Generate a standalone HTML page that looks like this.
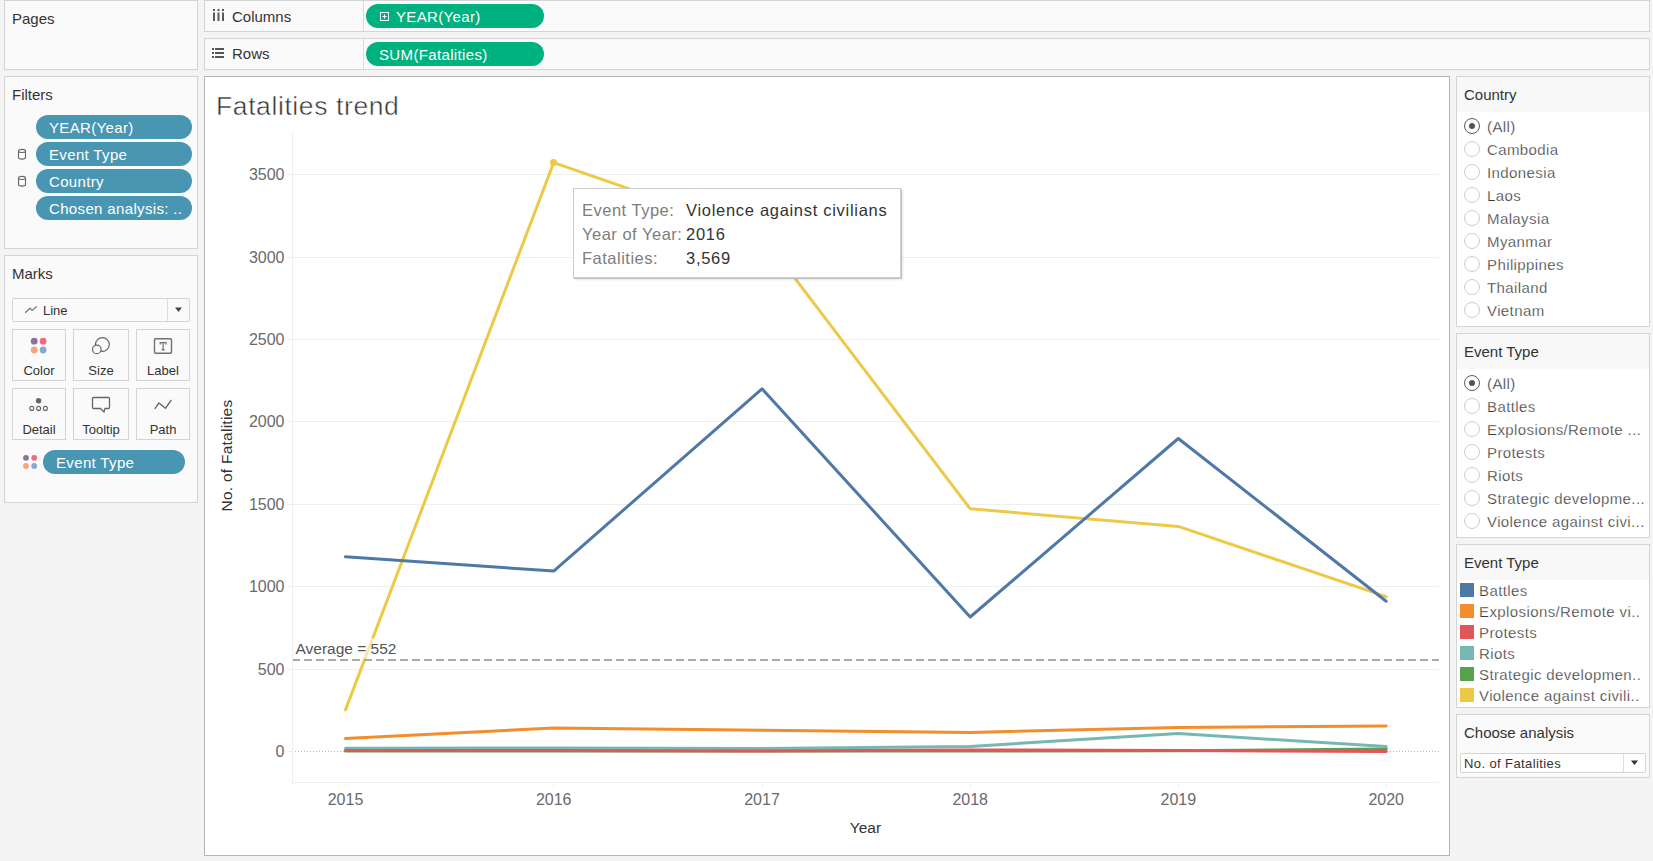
<!DOCTYPE html>
<html><head><meta charset="utf-8">
<style>
*{box-sizing:border-box;margin:0;padding:0}
html,body{width:1653px;height:861px;overflow:hidden;background:#f4f4f4;font-family:"Liberation Sans",sans-serif;color:#333}
.a{position:absolute}
.card{position:absolute;background:#fafafa;border:1px solid #d4d4d4}
.t{position:absolute;white-space:nowrap;font-size:15px;line-height:15px}
.pill{position:absolute;border-radius:12px;color:#fff;font-size:15px;line-height:24px;white-space:nowrap;overflow:hidden}
.bp{background:#4996b2}
.gp{background:#00b180}
.btn{position:absolute;border:1px solid #d4d4d4;background:#fafafa}
.btn span{position:absolute;left:0;right:0;text-align:center;font-size:13px;line-height:13px;color:#333}
.rad{position:absolute;width:16px;height:16px;border-radius:50%;border:1px solid #cdcdcd;background:#fff}
.rad.on::after{content:"";position:absolute;left:4px;top:4px;width:6px;height:6px;border-radius:50%;background:#555}
.rad.on{border-color:#5a5a5a}
.sw{position:absolute;width:14px;height:14px}
.ax{font-family:"Liberation Sans",sans-serif;font-size:16px;fill:#6a6a6a}
.avg{font-family:"Liberation Sans",sans-serif;font-size:15.5px;fill:#555}
.ttl{font-family:"Liberation Sans",sans-serif;font-size:15.5px;fill:#333}
.ytl{letter-spacing:0.25px}
.lt{position:absolute;white-space:nowrap;font-size:15px;line-height:15px;color:#3a3a3a;letter-spacing:0.4px;-webkit-text-stroke:0.25px #fff}
.tip{position:absolute;left:573px;top:188px;width:328px;height:90px;background:#fff;border:1px solid #cdcdcd;box-shadow:1px 1px 0 #c2c2c2,2px 2px 2px rgba(0,0,0,0.10)}
.tl{position:absolute;white-space:nowrap;font-size:16.5px;line-height:16px;color:#7d7d7d;letter-spacing:0.5px}
.tv{position:absolute;white-space:nowrap;font-size:16.5px;line-height:16px;color:#333;letter-spacing:0.7px}
</style></head><body>

<!-- Pages -->
<div class="card" style="left:4px;top:0;width:194px;height:70px"></div>
<div class="t" style="left:12px;top:11px">Pages</div>

<!-- Columns shelf -->
<div class="card" style="left:204px;top:0;width:1446px;height:32px"></div>
<div class="a" style="left:363px;top:1px;width:1px;height:30px;background:#dcdcdc"></div>
<svg class="a" style="left:211.5px;top:8px" width="14" height="14">
<rect x="1" y="1" width="2" height="2" fill="#5a5a5a"/><rect x="1" y="4.5" width="2" height="8.5" fill="#5a5a5a"/>
<rect x="5.5" y="1" width="2" height="2" fill="#5a5a5a"/><rect x="5.5" y="4.5" width="2" height="8.5" fill="#5a5a5a"/>
<rect x="10" y="1" width="2" height="2" fill="#5a5a5a"/><rect x="10" y="4.5" width="2" height="8.5" fill="#5a5a5a"/>
</svg>
<div class="t" style="left:232px;top:9px">Columns</div>
<div class="pill gp" style="left:366px;top:4px;width:178px;height:24px"></div>
<svg class="a" style="left:379px;top:11px" width="11" height="11"><rect x="1.5" y="1.5" width="8" height="8" fill="none" stroke="#fff" stroke-width="1"/><path d="M5.5 3.5v4M3.5 5.5h4" stroke="#fff" stroke-width="1"/></svg>
<div class="t" style="left:396px;top:9px;color:#fff;letter-spacing:0.35px">YEAR(Year)</div>

<!-- Rows shelf -->
<div class="card" style="left:204px;top:38px;width:1446px;height:32px"></div>
<div class="a" style="left:363px;top:39px;width:1px;height:30px;background:#dcdcdc"></div>
<svg class="a" style="left:211px;top:47px" width="14" height="14">
<rect x="1" y="1" width="2" height="2" fill="#555"/><rect x="4" y="1" width="9" height="2" fill="#555"/>
<rect x="1" y="5" width="2" height="2" fill="#555"/><rect x="4" y="5" width="9" height="2" fill="#555"/>
<rect x="1" y="9" width="2" height="2" fill="#555"/><rect x="4" y="9" width="9" height="2" fill="#555"/>
</svg>
<div class="t" style="left:232px;top:46px">Rows</div>
<div class="pill gp" style="left:366px;top:42px;width:178px;height:24px"></div>
<div class="t" style="left:379px;top:47px;color:#fff;letter-spacing:0.35px">SUM(Fatalities)</div>

<!-- Filters -->
<div class="card" style="left:4px;top:76px;width:194px;height:173px"></div>
<div class="t" style="left:12px;top:87px">Filters</div>
<div class="pill bp" style="left:36px;top:115px;width:156px;height:24px"></div>
<div class="pill bp" style="left:36px;top:142px;width:156px;height:24px"></div>
<div class="pill bp" style="left:36px;top:169px;width:156px;height:24px"></div>
<div class="pill bp" style="left:36px;top:196px;width:156px;height:24px"></div>
<div class="t" style="left:49px;top:120px;color:#fff;letter-spacing:0.35px">YEAR(Year)</div>
<div class="t" style="left:49px;top:147px;color:#fff;letter-spacing:0.35px">Event Type</div>
<div class="t" style="left:49px;top:174px;color:#fff;letter-spacing:0.35px">Country</div>
<div class="t" style="left:49px;top:201px;color:#fff;letter-spacing:0.35px">Chosen analysis: ..</div>
<svg class="a" style="left:17px;top:148px" width="11" height="12"><path d="M1.5 3v6.5c0 1.1 1.6 1.6 3.5 1.6s3.5-.5 3.5-1.6V3c0-1.1-1.6-1.6-3.5-1.6S1.5 1.9 1.5 3zM1.5 3.6c.6.7 2 .9 3.5.9s2.9-.2 3.5-.9" fill="none" stroke="#666" stroke-width="1.1"/></svg>
<svg class="a" style="left:17px;top:175px" width="11" height="12"><path d="M1.5 3v6.5c0 1.1 1.6 1.6 3.5 1.6s3.5-.5 3.5-1.6V3c0-1.1-1.6-1.6-3.5-1.6S1.5 1.9 1.5 3zM1.5 3.6c.6.7 2 .9 3.5.9s2.9-.2 3.5-.9" fill="none" stroke="#666" stroke-width="1.1"/></svg>

<!-- Marks -->
<div class="card" style="left:4px;top:255px;width:194px;height:248px"></div>
<div class="t" style="left:12px;top:266px">Marks</div>
<div class="btn" style="left:12px;top:298px;width:178px;height:24px;border-radius:2px"></div>
<div class="a" style="left:167px;top:299px;width:1px;height:22px;background:#dedede"></div>
<svg class="a" style="left:174px;top:306px" width="9" height="8"><path d="M1 1.5h7L4.5 6z" fill="#444"/></svg>
<svg class="a" style="left:24px;top:305px" width="14" height="9"><path d="M1.2 7.8L6.2 3.2 8 5.5 12.8 1.5" fill="none" stroke="#777" stroke-width="1.2"/></svg>
<div class="t" style="left:43px;top:304px;font-size:13px;line-height:13px">Line</div>
<div class="btn" style="left:12px;top:329px;width:54px;height:52px"><span style="top:34px">Color</span></div>
<div class="btn" style="left:73px;top:329px;width:56px;height:52px"><span style="top:34px">Size</span></div>
<div class="btn" style="left:136px;top:329px;width:54px;height:52px"><span style="top:34px">Label</span></div>
<div class="btn" style="left:12px;top:388px;width:54px;height:52px"><span style="top:34px">Detail</span></div>
<div class="btn" style="left:73px;top:388px;width:56px;height:52px"><span style="top:34px">Tooltip</span></div>
<div class="btn" style="left:136px;top:388px;width:54px;height:52px"><span style="top:34px">Path</span></div>
<svg class="a" style="left:0;top:0" width="200" height="500">
<circle cx="34.2" cy="341.2" r="3.4" fill="#8a729c"/><circle cx="43.1" cy="341.2" r="3.4" fill="#ef6b81"/>
<circle cx="34.2" cy="350" r="3.4" fill="#f2a77c"/><circle cx="43.1" cy="350" r="3.4" fill="#87a9d1"/>
<circle cx="102.4" cy="344.5" r="6.9" fill="none" stroke="#666" stroke-width="1.2"/>
<circle cx="96.8" cy="349.4" r="4.3" fill="#fafafa" stroke="#666" stroke-width="1.2"/>
<rect x="154.5" y="338.8" width="17" height="14.5" rx="1" fill="none" stroke="#707070" stroke-width="1.4"/>
<path d="M160.2 344.6v-1.9h5.8v1.9M163.1 342.7v7.2M161.5 349.9h3.2" fill="none" stroke="#707070" stroke-width="1.2"/>
<circle cx="38.6" cy="400.8" r="2.7" fill="#666"/>
<circle cx="31.8" cy="408.4" r="2.0" fill="none" stroke="#666" stroke-width="1.1"/>
<circle cx="38.6" cy="408.4" r="2.0" fill="none" stroke="#666" stroke-width="1.1"/>
<circle cx="45.4" cy="408.4" r="2.0" fill="none" stroke="#666" stroke-width="1.1"/>
<path d="M93.5 397.5h15c.6 0 1 .4 1 1v9c0 .6-.4 1-1 1h-3.5l-1 3.5-3.5-3.5h-7c-.6 0-1-.4-1-1v-9c0-.6.4-1 1-1z" fill="none" stroke="#666" stroke-width="1.3"/>
<path d="M154.8 408.8L158.9 403 165.5 408.2 171.3 400" fill="none" stroke="#666" stroke-width="1.3"/>
<circle cx="26" cy="457.8" r="2.9" fill="#8a729c"/><circle cx="34.2" cy="457.8" r="2.9" fill="#ef6b81"/>
<circle cx="26" cy="466" r="2.9" fill="#f2a77c"/><circle cx="34.2" cy="466" r="2.9" fill="#87a9d1"/>
</svg>
<div class="pill bp" style="left:43px;top:450px;width:142px;height:24px"></div>
<div class="t" style="left:56px;top:455px;color:#fff;letter-spacing:0.35px">Event Type</div>

<!-- Viz -->
<div class="a" style="left:204px;top:76px;width:1246px;height:780px;background:#fff;border:1px solid #b5b5b5"></div>
<div class="t" style="left:216px;top:93px;font-size:26.5px;line-height:26px;color:#333;letter-spacing:0.6px;-webkit-text-stroke:0.5px #fff">Fatalities trend</div>
<svg class="a" style="left:0;top:0" width="1653" height="861">
<line x1="287" y1="751.5" x2="292" y2="751.5" stroke="#ededed" stroke-width="1"/>
<line x1="287" y1="669.5" x2="1439" y2="669.5" stroke="#efefef" stroke-width="1"/>
<line x1="287" y1="586.5" x2="1439" y2="586.5" stroke="#efefef" stroke-width="1"/>
<line x1="287" y1="504.5" x2="1439" y2="504.5" stroke="#efefef" stroke-width="1"/>
<line x1="287" y1="421.5" x2="1439" y2="421.5" stroke="#efefef" stroke-width="1"/>
<line x1="287" y1="339.5" x2="1439" y2="339.5" stroke="#efefef" stroke-width="1"/>
<line x1="287" y1="257.5" x2="1439" y2="257.5" stroke="#efefef" stroke-width="1"/>
<line x1="287" y1="174.5" x2="1439" y2="174.5" stroke="#efefef" stroke-width="1"/>
<line x1="292.5" y1="132" x2="292.5" y2="783" stroke="#eeeeee" stroke-width="1"/>
<line x1="292" y1="782.5" x2="1439" y2="782.5" stroke="#eeeeee" stroke-width="1"/>
<line x1="293.5" y1="782" x2="293.5" y2="784" stroke="#ededed" stroke-width="1"/>
<line x1="310.5" y1="782" x2="310.5" y2="784" stroke="#ededed" stroke-width="1"/>
<line x1="327.5" y1="782" x2="327.5" y2="784" stroke="#ededed" stroke-width="1"/>
<line x1="345.5" y1="782" x2="345.5" y2="787" stroke="#ededed" stroke-width="1"/>
<line x1="363.5" y1="782" x2="363.5" y2="784" stroke="#ededed" stroke-width="1"/>
<line x1="379.5" y1="782" x2="379.5" y2="784" stroke="#ededed" stroke-width="1"/>
<line x1="396.5" y1="782" x2="396.5" y2="784" stroke="#ededed" stroke-width="1"/>
<line x1="413.5" y1="782" x2="413.5" y2="784" stroke="#ededed" stroke-width="1"/>
<line x1="431.5" y1="782" x2="431.5" y2="784" stroke="#ededed" stroke-width="1"/>
<line x1="448.5" y1="782" x2="448.5" y2="784" stroke="#ededed" stroke-width="1"/>
<line x1="466.5" y1="782" x2="466.5" y2="784" stroke="#ededed" stroke-width="1"/>
<line x1="483.5" y1="782" x2="483.5" y2="784" stroke="#ededed" stroke-width="1"/>
<line x1="501.5" y1="782" x2="501.5" y2="784" stroke="#ededed" stroke-width="1"/>
<line x1="518.5" y1="782" x2="518.5" y2="784" stroke="#ededed" stroke-width="1"/>
<line x1="535.5" y1="782" x2="535.5" y2="784" stroke="#ededed" stroke-width="1"/>
<line x1="553.5" y1="782" x2="553.5" y2="787" stroke="#ededed" stroke-width="1"/>
<line x1="571.5" y1="782" x2="571.5" y2="784" stroke="#ededed" stroke-width="1"/>
<line x1="587.5" y1="782" x2="587.5" y2="784" stroke="#ededed" stroke-width="1"/>
<line x1="605.5" y1="782" x2="605.5" y2="784" stroke="#ededed" stroke-width="1"/>
<line x1="622.5" y1="782" x2="622.5" y2="784" stroke="#ededed" stroke-width="1"/>
<line x1="640.5" y1="782" x2="640.5" y2="784" stroke="#ededed" stroke-width="1"/>
<line x1="657.5" y1="782" x2="657.5" y2="784" stroke="#ededed" stroke-width="1"/>
<line x1="674.5" y1="782" x2="674.5" y2="784" stroke="#ededed" stroke-width="1"/>
<line x1="692.5" y1="782" x2="692.5" y2="784" stroke="#ededed" stroke-width="1"/>
<line x1="709.5" y1="782" x2="709.5" y2="784" stroke="#ededed" stroke-width="1"/>
<line x1="727.5" y1="782" x2="727.5" y2="784" stroke="#ededed" stroke-width="1"/>
<line x1="744.5" y1="782" x2="744.5" y2="784" stroke="#ededed" stroke-width="1"/>
<line x1="762.5" y1="782" x2="762.5" y2="787" stroke="#ededed" stroke-width="1"/>
<line x1="779.5" y1="782" x2="779.5" y2="784" stroke="#ededed" stroke-width="1"/>
<line x1="795.5" y1="782" x2="795.5" y2="784" stroke="#ededed" stroke-width="1"/>
<line x1="813.5" y1="782" x2="813.5" y2="784" stroke="#ededed" stroke-width="1"/>
<line x1="830.5" y1="782" x2="830.5" y2="784" stroke="#ededed" stroke-width="1"/>
<line x1="848.5" y1="782" x2="848.5" y2="784" stroke="#ededed" stroke-width="1"/>
<line x1="865.5" y1="782" x2="865.5" y2="784" stroke="#ededed" stroke-width="1"/>
<line x1="882.5" y1="782" x2="882.5" y2="784" stroke="#ededed" stroke-width="1"/>
<line x1="900.5" y1="782" x2="900.5" y2="784" stroke="#ededed" stroke-width="1"/>
<line x1="917.5" y1="782" x2="917.5" y2="784" stroke="#ededed" stroke-width="1"/>
<line x1="935.5" y1="782" x2="935.5" y2="784" stroke="#ededed" stroke-width="1"/>
<line x1="952.5" y1="782" x2="952.5" y2="784" stroke="#ededed" stroke-width="1"/>
<line x1="970.5" y1="782" x2="970.5" y2="787" stroke="#ededed" stroke-width="1"/>
<line x1="987.5" y1="782" x2="987.5" y2="784" stroke="#ededed" stroke-width="1"/>
<line x1="1003.5" y1="782" x2="1003.5" y2="784" stroke="#ededed" stroke-width="1"/>
<line x1="1021.5" y1="782" x2="1021.5" y2="784" stroke="#ededed" stroke-width="1"/>
<line x1="1038.5" y1="782" x2="1038.5" y2="784" stroke="#ededed" stroke-width="1"/>
<line x1="1056.5" y1="782" x2="1056.5" y2="784" stroke="#ededed" stroke-width="1"/>
<line x1="1073.5" y1="782" x2="1073.5" y2="784" stroke="#ededed" stroke-width="1"/>
<line x1="1090.5" y1="782" x2="1090.5" y2="784" stroke="#ededed" stroke-width="1"/>
<line x1="1108.5" y1="782" x2="1108.5" y2="784" stroke="#ededed" stroke-width="1"/>
<line x1="1125.5" y1="782" x2="1125.5" y2="784" stroke="#ededed" stroke-width="1"/>
<line x1="1143.5" y1="782" x2="1143.5" y2="784" stroke="#ededed" stroke-width="1"/>
<line x1="1160.5" y1="782" x2="1160.5" y2="784" stroke="#ededed" stroke-width="1"/>
<line x1="1178.5" y1="782" x2="1178.5" y2="787" stroke="#ededed" stroke-width="1"/>
<line x1="1195.5" y1="782" x2="1195.5" y2="784" stroke="#ededed" stroke-width="1"/>
<line x1="1211.5" y1="782" x2="1211.5" y2="784" stroke="#ededed" stroke-width="1"/>
<line x1="1229.5" y1="782" x2="1229.5" y2="784" stroke="#ededed" stroke-width="1"/>
<line x1="1246.5" y1="782" x2="1246.5" y2="784" stroke="#ededed" stroke-width="1"/>
<line x1="1264.5" y1="782" x2="1264.5" y2="784" stroke="#ededed" stroke-width="1"/>
<line x1="1281.5" y1="782" x2="1281.5" y2="784" stroke="#ededed" stroke-width="1"/>
<line x1="1299.5" y1="782" x2="1299.5" y2="784" stroke="#ededed" stroke-width="1"/>
<line x1="1316.5" y1="782" x2="1316.5" y2="784" stroke="#ededed" stroke-width="1"/>
<line x1="1333.5" y1="782" x2="1333.5" y2="784" stroke="#ededed" stroke-width="1"/>
<line x1="1351.5" y1="782" x2="1351.5" y2="784" stroke="#ededed" stroke-width="1"/>
<line x1="1368.5" y1="782" x2="1368.5" y2="784" stroke="#ededed" stroke-width="1"/>
<line x1="1386.5" y1="782" x2="1386.5" y2="787" stroke="#ededed" stroke-width="1"/>
<line x1="1403.5" y1="782" x2="1403.5" y2="784" stroke="#ededed" stroke-width="1"/>
<line x1="1420.5" y1="782" x2="1420.5" y2="784" stroke="#ededed" stroke-width="1"/>
<line x1="1438.5" y1="782" x2="1438.5" y2="784" stroke="#ededed" stroke-width="1"/>
<line x1="295" y1="751.5" x2="1439" y2="751.5" stroke="#b8b8b8" stroke-width="1" stroke-dasharray="1 2"/>
<text x="284.5" y="756.5" text-anchor="end" class="ax">0</text>
<text x="284.5" y="674.5" text-anchor="end" class="ax">500</text>
<text x="284.5" y="591.5" text-anchor="end" class="ax">1000</text>
<text x="284.5" y="509.5" text-anchor="end" class="ax">1500</text>
<text x="284.5" y="426.5" text-anchor="end" class="ax">2000</text>
<text x="284.5" y="344.5" text-anchor="end" class="ax">2500</text>
<text x="284.5" y="262.5" text-anchor="end" class="ax">3000</text>
<text x="284.5" y="179.5" text-anchor="end" class="ax">3500</text>
<text x="345.5" y="805" text-anchor="middle" class="ax">2015</text>
<text x="553.7" y="805" text-anchor="middle" class="ax">2016</text>
<text x="762.0" y="805" text-anchor="middle" class="ax">2017</text>
<text x="970.2" y="805" text-anchor="middle" class="ax">2018</text>
<text x="1178.3" y="805" text-anchor="middle" class="ax">2019</text>
<text x="1386.2" y="805" text-anchor="middle" class="ax">2020</text>
<polyline points="345.5,709.9 553.7,162.6 762.0,235.0 970.2,508.8 1178.3,526.4 1386.2,596.7" fill="none" stroke="#edc948" stroke-width="3" stroke-linejoin="round" stroke-linecap="round"/>
<polyline points="345.5,751.0 553.7,751.0 762.0,751.0 970.2,751.0 1178.3,750.8 1386.2,749.0" fill="none" stroke="#59a14f" stroke-width="3" stroke-linejoin="round" stroke-linecap="round"/>
<polyline points="345.5,748.3 553.7,748.0 762.0,748.6 970.2,746.4 1178.3,733.6 1386.2,746.6" fill="none" stroke="#76b7b2" stroke-width="3" stroke-linejoin="round" stroke-linecap="round"/>
<polyline points="345.5,750.6 553.7,750.6 762.0,751.0 970.2,749.9 1178.3,750.6 1386.2,751.4" fill="none" stroke="#e15759" stroke-width="3" stroke-linejoin="round" stroke-linecap="round"/>
<polyline points="345.5,738.6 553.7,728.0 762.0,730.2 970.2,732.4 1178.3,727.4 1386.2,726.1" fill="none" stroke="#f28e2b" stroke-width="3" stroke-linejoin="round" stroke-linecap="round"/>
<polyline points="345.5,556.8 553.7,571.1 762.0,388.8 970.2,617.0 1178.3,438.5 1386.2,601.2" fill="none" stroke="#4e79a7" stroke-width="3" stroke-linejoin="round" stroke-linecap="round"/>
<line x1="293" y1="660" x2="1439" y2="660" stroke="#a9a9a9" stroke-width="2" stroke-dasharray="8 4" stroke-dashoffset="1"/>
<circle cx="553.5" cy="162.5" r="3.6" fill="#edc948"/>
<rect x="294" y="638" width="103" height="20.5" fill="#fff" fill-opacity="0.55"/>
<text x="295.5" y="654" class="avg">Average = 552</text>
<text x="865.5" y="833" text-anchor="middle" class="ttl">Year</text>
<text transform="translate(232,455.5) rotate(-90)" text-anchor="middle" class="ttl ytl">No. of Fatalities</text>
</svg>
<div class="tip"></div>
<div class="tl" style="left:582px;top:202px">Event Type:</div>
<div class="tv" style="left:686px;top:202px">Violence against civilians</div>
<div class="tl" style="left:582px;top:226px">Year of Year:</div>
<div class="tv" style="left:686px;top:226px">2016</div>
<div class="tl" style="left:582px;top:250px">Fatalities:</div>
<div class="tv" style="left:686px;top:250px">3,569</div>

<!-- Right panels -->
<div class="card" style="left:1456px;top:76px;width:194px;height:251px;background:#fff"></div>
<div class="a" style="left:1457px;top:77px;width:192px;height:35px;background:#f8f8f8"></div>
<div class="t" style="left:1464px;top:87px">Country</div>
<div class="rad on" style="left:1464px;top:118px"></div><div class="lt" style="left:1487px;top:119px">(All)</div>
<div class="rad" style="left:1464px;top:141px"></div><div class="lt" style="left:1487px;top:142px">Cambodia</div>
<div class="rad" style="left:1464px;top:164px"></div><div class="lt" style="left:1487px;top:165px">Indonesia</div>
<div class="rad" style="left:1464px;top:187px"></div><div class="lt" style="left:1487px;top:188px">Laos</div>
<div class="rad" style="left:1464px;top:210px"></div><div class="lt" style="left:1487px;top:211px">Malaysia</div>
<div class="rad" style="left:1464px;top:233px"></div><div class="lt" style="left:1487px;top:234px">Myanmar</div>
<div class="rad" style="left:1464px;top:256px"></div><div class="lt" style="left:1487px;top:257px">Philippines</div>
<div class="rad" style="left:1464px;top:279px"></div><div class="lt" style="left:1487px;top:280px">Thailand</div>
<div class="rad" style="left:1464px;top:302px"></div><div class="lt" style="left:1487px;top:303px">Vietnam</div>

<div class="card" style="left:1456px;top:333px;width:194px;height:205px;background:#fff"></div>
<div class="a" style="left:1457px;top:334px;width:192px;height:35px;background:#f8f8f8"></div>
<div class="t" style="left:1464px;top:344px">Event Type</div>
<div class="rad on" style="left:1464px;top:375px"></div><div class="lt" style="left:1487px;top:376px">(All)</div>
<div class="rad" style="left:1464px;top:398px"></div><div class="lt" style="left:1487px;top:399px">Battles</div>
<div class="rad" style="left:1464px;top:421px"></div><div class="lt" style="left:1487px;top:422px">Explosions/Remote ...</div>
<div class="rad" style="left:1464px;top:444px"></div><div class="lt" style="left:1487px;top:445px">Protests</div>
<div class="rad" style="left:1464px;top:467px"></div><div class="lt" style="left:1487px;top:468px">Riots</div>
<div class="rad" style="left:1464px;top:490px"></div><div class="lt" style="left:1487px;top:491px">Strategic developme...</div>
<div class="rad" style="left:1464px;top:513px"></div><div class="lt" style="left:1487px;top:514px">Violence against civi...</div>

<div class="card" style="left:1456px;top:544px;width:194px;height:164px;background:#fff"></div>
<div class="a" style="left:1457px;top:545px;width:192px;height:35px;background:#f8f8f8"></div>
<div class="t" style="left:1464px;top:555px">Event Type</div>
<div class="sw" style="left:1460px;top:583px;background:#4e79a7"></div><div class="lt" style="left:1479px;top:583px">Battles</div>
<div class="sw" style="left:1460px;top:604px;background:#f28e2b"></div><div class="lt" style="left:1479px;top:604px">Explosions/Remote vi..</div>
<div class="sw" style="left:1460px;top:625px;background:#e15759"></div><div class="lt" style="left:1479px;top:625px">Protests</div>
<div class="sw" style="left:1460px;top:646px;background:#76b7b2"></div><div class="lt" style="left:1479px;top:646px">Riots</div>
<div class="sw" style="left:1460px;top:667px;background:#59a14f"></div><div class="lt" style="left:1479px;top:667px">Strategic developmen..</div>
<div class="sw" style="left:1460px;top:688px;background:#edc948"></div><div class="lt" style="left:1479px;top:688px">Violence against civili..</div>

<div class="card" style="left:1456px;top:714px;width:194px;height:64px"></div>
<div class="t" style="left:1464px;top:725px">Choose analysis</div>
<div class="btn" style="left:1460px;top:753px;width:186px;height:20px;background:#fff;border-radius:2px"></div>
<div class="a" style="left:1623px;top:754px;width:1px;height:18px;background:#dedede"></div>
<svg class="a" style="left:1630px;top:759px" width="9" height="8"><path d="M1 1.5h7L4.5 6z" fill="#333"/></svg>
<div class="t" style="left:1464px;top:757px;font-size:13px;line-height:13px;letter-spacing:0.4px">No. of Fatalities</div>

</body></html>
